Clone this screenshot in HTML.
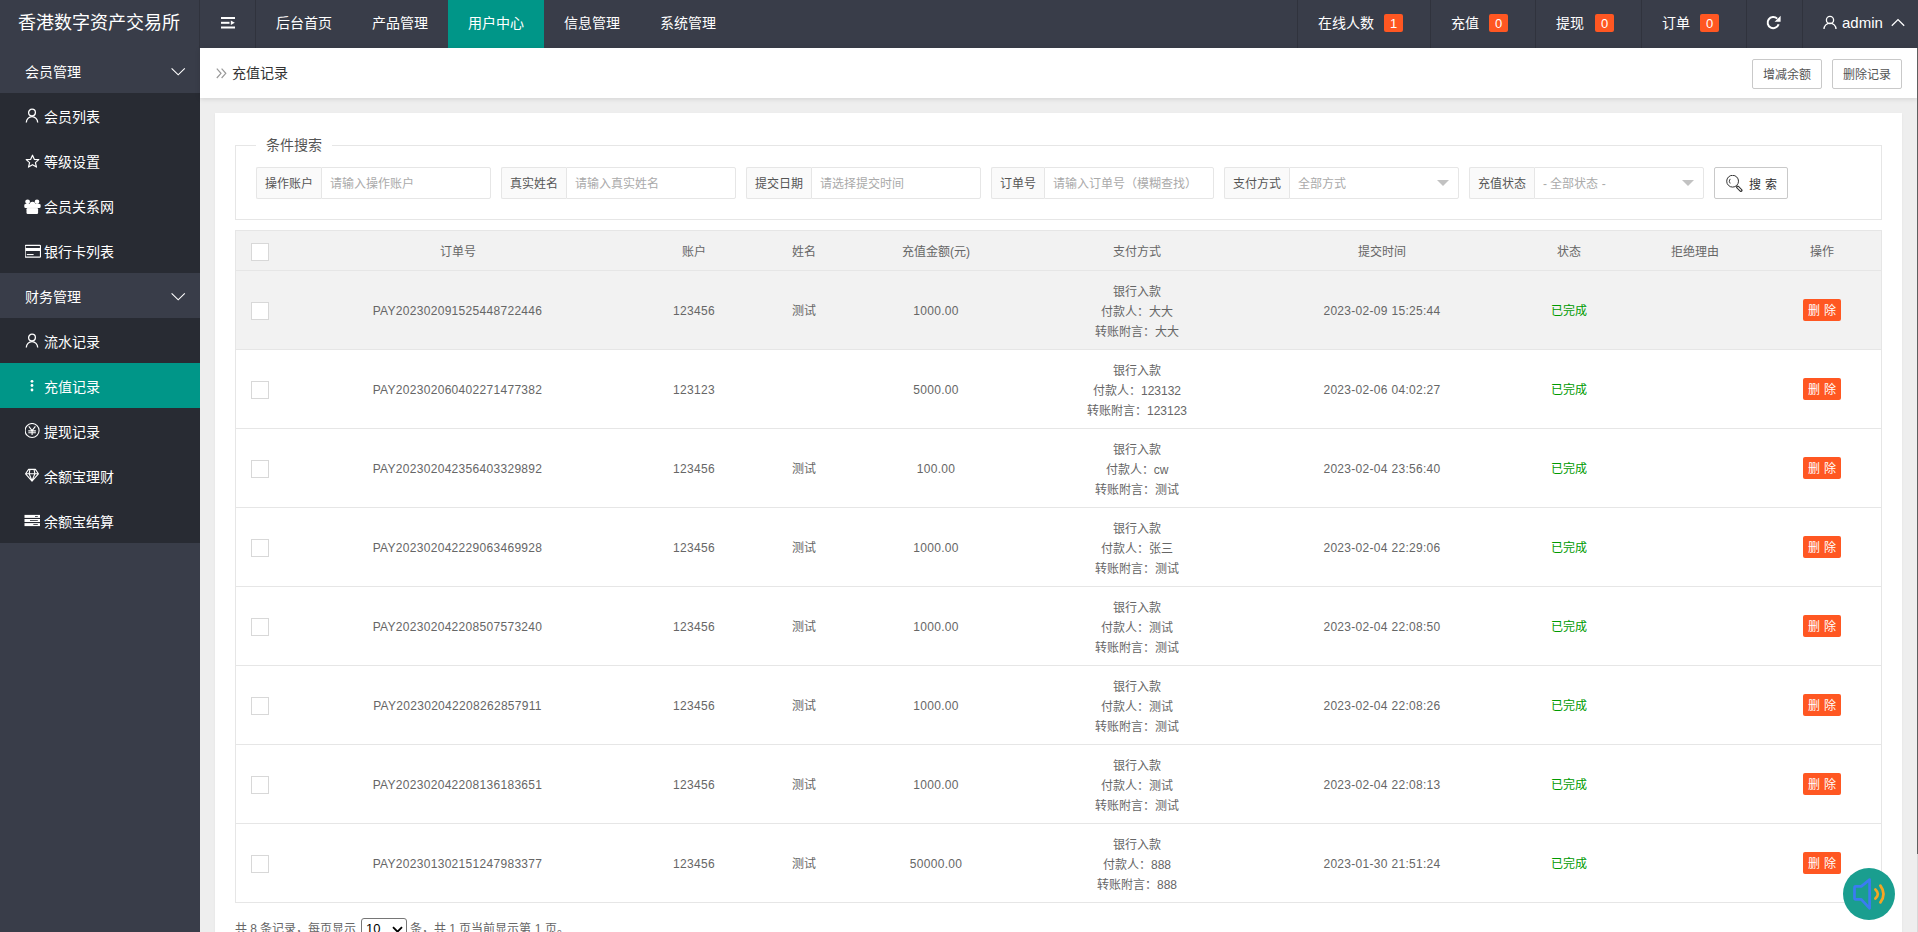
<!DOCTYPE html>
<html lang="zh-CN"><head><meta charset="utf-8">
<style>
*{box-sizing:border-box;margin:0;padding:0}
html,body{width:1918px;height:932px;overflow:hidden}
body{position:relative;background:#EEEEEE;font-family:"Liberation Sans",sans-serif;color:#666;font-size:14px}
.abs{position:absolute}
svg{display:block}
/* header */
#hd{left:0;top:0;width:1918px;height:48px;background:#393D49;color:#fff}
#logo{left:18px;top:0;line-height:46px;font-size:18px;white-space:nowrap}
.vsep{top:0;width:1px;height:48px;background:#30333d}
.nav{top:0;height:48px;line-height:46px;font-size:14px;color:#fff;white-space:nowrap}
.badge{top:14px;height:18px;width:19px;background:#FF5722;color:#fff;font-size:13px;line-height:20px;text-align:center;border-radius:2px}
/* side */
#side{left:0;top:48px;width:200px;height:884px;background:#393D49}
.grp{left:0;width:200px;height:45px;line-height:45px;color:#fff;font-size:14px}
.grp span{position:absolute;left:25px;top:1px;line-height:46px}
.sub{left:0;width:200px;height:45px;line-height:45px;color:#fff;font-size:14px;background:#282B33}
.sub span{position:absolute;left:44px;top:1px;line-height:46px}
.sub svg{position:absolute;left:25px;top:15px}
.sub.on{background:#009688}
/* content */
#crumb{left:200px;top:48px;width:1717px;height:50px;background:#fff;box-shadow:0 1px 5px rgba(0,0,0,.12)}
.btn{height:30px;line-height:30px;border:1px solid #C9C9C9;border-radius:2px;background:#fff;color:#555;font-size:12px;text-align:center}
#card{left:215px;top:113px;width:1687px;height:830px;background:#fff;box-shadow:0 1px 2px rgba(0,0,0,.06)}
#fs{left:235px;top:145px;width:1647px;height:75px;border:1px solid #E6E6E6}
#legend{left:256px;top:135px;width:76px;height:20px;background:#fff;line-height:20px;font-size:14px;color:#555;padding-left:10px}
.lab{top:167px;height:32px;border:1px solid #E6E6E6;border-right:none;background:#FAFAFA;border-radius:2px 0 0 2px;line-height:32px;font-size:12px;color:#555;padding-left:8px;white-space:nowrap}
.inp{top:167px;height:32px;width:170px;border:1px solid #E6E6E6;border-radius:0 2px 2px 0;line-height:32px;font-size:12px;color:#AAAAAA;padding-left:8px;white-space:nowrap;background:#fff}
.arrow{top:12px;width:0;height:0;border-left:6px solid transparent;border-right:6px solid transparent;border-top:6px solid #C2C2C2}
/* table */
#tbl{left:235px;top:230px;width:1647px;border:1px solid #E6E6E6;border-bottom:none}
.tr{position:relative;height:79px;border-bottom:1px solid #E6E6E6;background:#fff}
.th{height:40px;background:#F2F2F2}
.c{position:absolute;top:0;text-align:center;font-size:12px;color:#666;line-height:20px;white-space:nowrap}
.tr .c{top:30px}
.tr .c.m{top:11px}
.tr.th .c{top:11px}
.cb{position:absolute;left:15px;width:18px;height:18px;border:1px solid #D8D8D8;background:#fff;border-radius:0}
.tr .cb{top:31px}
.tr.th .cb{top:12px}
.ok{color:#009a00}
.n{letter-spacing:0.3px}
.del{position:absolute;top:28px;height:22px;width:38px;background:#FF5722;color:#fff;border-radius:2px;font-size:12px;line-height:25px;text-align:center}
</style></head><body>

<div id="hd" class="abs">
  <div id="logo" class="abs">香港数字资产交易所</div>
  <div class="vsep abs" style="left:199px"></div>
  <div class="vsep abs" style="left:255px"></div>
  <svg class="abs" style="left:221px;top:17px" width="15" height="12" viewBox="0 0 15 12">
    <rect x="0" y="0" width="14" height="2" fill="#fff"/>
    <rect x="0" y="4.8" width="8.5" height="2" fill="#fff"/>
    <path d="M9.8 3.5 L13.8 5.8 L9.8 8.1 Z" fill="#fff"/>
    <rect x="0" y="9.5" width="14" height="2" fill="#fff"/>
  </svg>
  <div class="nav abs" style="left:276px">后台首页</div>
  <div class="nav abs" style="left:372px">产品管理</div>
  <div class="abs" style="left:448px;top:0;width:96px;height:48px;background:#009688"></div>
  <div class="nav abs" style="left:468px">用户中心</div>
  <div class="nav abs" style="left:564px">信息管理</div>
  <div class="nav abs" style="left:660px">系统管理</div>

  <div class="vsep abs" style="left:1297px"></div>
  <div class="nav abs" style="left:1318px">在线人数</div>
  <div class="badge abs" style="left:1384px">1</div>
  <div class="vsep abs" style="left:1430px"></div>
  <div class="nav abs" style="left:1451px">充值</div>
  <div class="badge abs" style="left:1489px">0</div>
  <div class="vsep abs" style="left:1535px"></div>
  <div class="nav abs" style="left:1556px">提现</div>
  <div class="badge abs" style="left:1595px">0</div>
  <div class="vsep abs" style="left:1641px"></div>
  <div class="nav abs" style="left:1662px">订单</div>
  <div class="badge abs" style="left:1700px">0</div>
  <div class="vsep abs" style="left:1746px"></div>
  <svg class="abs" style="left:1766px;top:15px" width="16" height="15" viewBox="0 0 16 15">
    <path d="M12.6 9.2 A5.6 5.6 0 1 1 11.2 3.6" fill="none" stroke="#fff" stroke-width="2"/>
    <path d="M8.6 6.8 L14.6 6.8 L14.6 0.8 Z" fill="#fff"/>
  </svg>
  <div class="vsep abs" style="left:1802px"></div>
  <svg class="abs" style="left:1823px;top:15px" width="14" height="15" viewBox="0 0 14 15">
    <circle cx="7" cy="5" r="3.6" fill="none" stroke="#fff" stroke-width="1.3"/>
    <path d="M1 14 A6 5.8 0 0 1 13 14" fill="none" stroke="#fff" stroke-width="1.3"/>
  </svg>
  <div class="nav abs" style="left:1842px;font-size:15px;line-height:45px">admin</div>
  <svg class="abs" style="left:1891px;top:18px" width="14" height="9" viewBox="0 0 14 9">
    <path d="M0.8 7.8 L7 1.6 L13.2 7.8" fill="none" stroke="#fff" stroke-width="1.3"/>
  </svg>
</div>

<div id="side" class="abs">
  <div class="grp abs" style="top:0"><span>会员管理</span>
    <svg class="abs" style="left:171px;top:19px" width="15" height="9" viewBox="0 0 15 9"><path d="M0.6 1.4 L7.2 7.8 L13.8 1.4" fill="none" stroke="#fff" stroke-width="1.15"/></svg>
  </div>
  <div class="sub abs" style="top:45px"><span>会员列表</span>
    <svg width="14" height="15" viewBox="0 0 14 15"><circle cx="7" cy="4.6" r="3.4" fill="none" stroke="#fff" stroke-width="1.3"/><path d="M1.3 14.5 A5.7 5.9 0 0 1 12.7 14.5" fill="none" stroke="#fff" stroke-width="1.3"/></svg>
  </div>
  <div class="sub abs" style="top:90px"><span>等级设置</span>
    <svg style="top:16px" width="15" height="15" viewBox="0 0 15 15"><path d="M7.5 1.2 L9.3 5.3 L13.8 5.6 L10.4 8.6 L11.5 13.1 L7.5 10.7 L3.5 13.1 L4.6 8.6 L1.2 5.6 L5.7 5.3 Z" fill="none" stroke="#fff" stroke-width="1.2" stroke-linejoin="round"/></svg>
  </div>
  <div class="sub abs" style="top:135px"><span>会员关系网</span>
    <svg style="left:24px;top:16px" width="17" height="16" viewBox="0 0 17 16"><circle cx="3.6" cy="2.8" r="2.4" fill="#fff"/><circle cx="13" cy="2.8" r="2.3" fill="#fff"/><rect x="0.3" y="4.9" width="16.3" height="4.1" rx="1.2" fill="#fff"/><circle cx="8.5" cy="5.6" r="2.9" fill="#fff"/><rect x="2.5" y="9" width="11.6" height="6" rx="1.2" fill="#fff"/><path d="M3 9.1 H14" stroke="#d8d8d8" stroke-width="0.4"/></svg>
  </div>
  <div class="sub abs" style="top:180px"><span>银行卡列表</span>
    <svg width="16" height="16" viewBox="0 0 16 16"><rect x="0.1" y="2.3" width="15.4" height="11.8" rx="0.8" fill="none" stroke="#fff" stroke-width="1.2"/><rect x="0.5" y="5" width="14.6" height="3" fill="#fff"/><rect x="1.8" y="11" width="6.8" height="1.1" fill="#fff"/></svg>
  </div>
  <div class="grp abs" style="top:225px"><span>财务管理</span>
    <svg class="abs" style="left:171px;top:19px" width="15" height="9" viewBox="0 0 15 9"><path d="M0.6 1.4 L7.2 7.8 L13.8 1.4" fill="none" stroke="#fff" stroke-width="1.15"/></svg>
  </div>
  <div class="sub abs" style="top:270px"><span>流水记录</span>
    <svg width="14" height="15" viewBox="0 0 14 15"><circle cx="7" cy="4.6" r="3.4" fill="none" stroke="#fff" stroke-width="1.3"/><path d="M1.3 14.5 A5.7 5.9 0 0 1 12.7 14.5" fill="none" stroke="#fff" stroke-width="1.3"/></svg>
  </div>
  <div class="sub on abs" style="top:315px"><span>充值记录</span>
    <svg width="14" height="15" viewBox="0 0 14 15"><circle cx="7" cy="3.3" r="1.4" fill="#fff"/><circle cx="7" cy="7.5" r="1.4" fill="#fff"/><circle cx="7" cy="12" r="1.4" fill="#fff"/></svg>
  </div>
  <div class="sub abs" style="top:360px"><span>提现记录</span>
    <svg width="16" height="16" viewBox="0 0 16 16"><circle cx="7.1" cy="7.5" r="7" fill="none" stroke="#fff" stroke-width="1.1"/><path d="M3.8 3.4 L7.1 7.6 L10.4 3.4 M7.1 7.6 V11.9 M3.3 7.9 H10.9 M3.3 9.7 H10.9" fill="none" stroke="#fff" stroke-width="1.1"/></svg>
  </div>
  <div class="sub abs" style="top:405px"><span>余额宝理财</span>
    <svg width="15" height="15" viewBox="0 0 15 15"><path d="M3.6 1.4 H10.4 L13.4 5.8 L7 13.2 L0.6 5.8 Z M0.6 5.8 H13.4 M4.9 1.6 L4.1 5.8 L7 12.6 L9.9 5.8 L9.1 1.6" fill="none" stroke="#fff" stroke-width="1.1" stroke-linejoin="round"/></svg>
  </div>
  <div class="sub abs" style="top:450px"><span>余额宝结算</span>
    <svg style="left:24px" width="17" height="15" viewBox="0 0 17 15"><rect x="0.5" y="1.9" width="15.5" height="3" fill="#fff"/><rect x="0.5" y="6" width="15.5" height="3" fill="#fff"/><rect x="0.5" y="10.1" width="15.5" height="3" fill="#fff"/><rect x="11" y="3.1" width="2.8" height="0.8" fill="#282B33"/><rect x="6" y="7.1" width="7.8" height="0.8" fill="#282B33"/><rect x="9.3" y="11.2" width="4.5" height="0.8" fill="#282B33"/></svg>
  </div>
</div>

<div id="crumb" class="abs">
  <svg class="abs" style="left:15.5px;top:20px" width="12" height="11" viewBox="0 0 12 11"><path d="M0.8 0.6 L5 5.3 L0.8 10 M5.6 0.6 L9.8 5.3 L5.6 10" fill="none" stroke="#999" stroke-width="1.2"/></svg>
  <div class="abs" style="left:32px;top:0;line-height:50px;font-size:14px;color:#333">充值记录</div>
  <div class="btn abs" style="left:1552px;top:11px;width:70px">增减余额</div>
  <div class="btn abs" style="left:1632px;top:11px;width:70px">删除记录</div>
</div>
<div class="abs" style="left:1917px;top:48px;width:1px;height:806px;background:#5f5f5f"></div>
<div class="abs" style="left:1917px;top:854px;width:1px;height:78px;background:#d8d8d8"></div>

<div id="card" class="abs"></div>
<div id="fs" class="abs"></div>
<div id="legend" class="abs">条件搜索</div>

<div class="lab abs" style="left:256px;width:65px">操作账户</div>
<div class="inp abs" style="left:321px">请输入操作账户</div>
<div class="lab abs" style="left:501px;width:65px">真实姓名</div>
<div class="inp abs" style="left:566px">请输入真实姓名</div>
<div class="lab abs" style="left:746px;width:65px">提交日期</div>
<div class="inp abs" style="left:811px">请选择提交时间</div>
<div class="lab abs" style="left:991px;width:53px">订单号</div>
<div class="inp abs" style="left:1044px">请输入订单号（模糊查找）</div>
<div class="lab abs" style="left:1224px;width:65px">支付方式</div>
<div class="inp abs" style="left:1289px">全部方式<div class="arrow abs" style="left:147px"></div></div>
<div class="lab abs" style="left:1469px;width:65px">充值状态</div>
<div class="inp abs" style="left:1534px">- 全部状态 -<div class="arrow abs" style="left:147px"></div></div>
<div class="btn abs" style="left:1714px;top:167px;width:74px;height:32px;line-height:30px;color:#333;text-align:left">
  <svg class="abs" style="left:10px;top:7px" width="18" height="17" viewBox="0 0 18 17"><circle cx="7.6" cy="6.2" r="5.9" fill="none" stroke="#333" stroke-width="1"/><path d="M12.7 12.2 L15.9 15.4" stroke="#333" stroke-width="3.2" stroke-linecap="round"/><path d="M12.9 12.4 L15.7 15.2" stroke="#fff" stroke-width="1.2" stroke-linecap="round"/><path d="M5.2 3.9 A3.6 3.6 0 0 0 5.2 8.5" fill="none" stroke="#333" stroke-width="0.9"/></svg>
  <span class="abs" style="left:34px;top:2px;letter-spacing:0.4px">搜&nbsp;索</span>
</div>

<div id="tbl" class="abs">
  <div class="tr th">
    <div class="cb"></div>
    <div class="c" style="left:49px;width:345px">订单号</div>
    <div class="c" style="left:394px;width:128px">账户</div>
    <div class="c" style="left:522px;width:91px">姓名</div>
    <div class="c" style="left:613px;width:174px">充值金额(元)</div>
    <div class="c" style="left:787px;width:228px">支付方式</div>
    <div class="c" style="left:1015px;width:262px">提交时间</div>
    <div class="c" style="left:1277px;width:112px">状态</div>
    <div class="c" style="left:1389px;width:139px">拒绝理由</div>
    <div class="c" style="left:1528px;width:116px">操作</div>
  </div>
  <!--ROWS-->
  <div class="tr" style="background:#F2F2F2">
    <div class="cb"></div>
    <div class="c n" style="left:49px;width:345px">PAY202302091525448722446</div>
    <div class="c n" style="left:394px;width:128px">123456</div>
    <div class="c" style="left:522px;width:91px">测试</div>
    <div class="c n" style="left:613px;width:174px">1000.00</div>
    <div class="c m" style="left:787px;width:228px">银行入款<br>付款人：大大<br>转账附言：大大</div>
    <div class="c n" style="left:1015px;width:262px">2023-02-09 15:25:44</div>
    <div class="c ok" style="left:1277px;width:112px">已完成</div>
    <div class="del" style="left:1567px">删&nbsp;除</div>
  </div>
  <div class="tr">
    <div class="cb"></div>
    <div class="c n" style="left:49px;width:345px">PAY202302060402271477382</div>
    <div class="c n" style="left:394px;width:128px">123123</div>
    <div class="c" style="left:522px;width:91px"></div>
    <div class="c n" style="left:613px;width:174px">5000.00</div>
    <div class="c m" style="left:787px;width:228px">银行入款<br>付款人：123132<br>转账附言：123123</div>
    <div class="c n" style="left:1015px;width:262px">2023-02-06 04:02:27</div>
    <div class="c ok" style="left:1277px;width:112px">已完成</div>
    <div class="del" style="left:1567px">删&nbsp;除</div>
  </div>
  <div class="tr">
    <div class="cb"></div>
    <div class="c n" style="left:49px;width:345px">PAY202302042356403329892</div>
    <div class="c n" style="left:394px;width:128px">123456</div>
    <div class="c" style="left:522px;width:91px">测试</div>
    <div class="c n" style="left:613px;width:174px">100.00</div>
    <div class="c m" style="left:787px;width:228px">银行入款<br>付款人：cw<br>转账附言：测试</div>
    <div class="c n" style="left:1015px;width:262px">2023-02-04 23:56:40</div>
    <div class="c ok" style="left:1277px;width:112px">已完成</div>
    <div class="del" style="left:1567px">删&nbsp;除</div>
  </div>
  <div class="tr">
    <div class="cb"></div>
    <div class="c n" style="left:49px;width:345px">PAY202302042229063469928</div>
    <div class="c n" style="left:394px;width:128px">123456</div>
    <div class="c" style="left:522px;width:91px">测试</div>
    <div class="c n" style="left:613px;width:174px">1000.00</div>
    <div class="c m" style="left:787px;width:228px">银行入款<br>付款人：张三<br>转账附言：测试</div>
    <div class="c n" style="left:1015px;width:262px">2023-02-04 22:29:06</div>
    <div class="c ok" style="left:1277px;width:112px">已完成</div>
    <div class="del" style="left:1567px">删&nbsp;除</div>
  </div>
  <div class="tr">
    <div class="cb"></div>
    <div class="c n" style="left:49px;width:345px">PAY202302042208507573240</div>
    <div class="c n" style="left:394px;width:128px">123456</div>
    <div class="c" style="left:522px;width:91px">测试</div>
    <div class="c n" style="left:613px;width:174px">1000.00</div>
    <div class="c m" style="left:787px;width:228px">银行入款<br>付款人：测试<br>转账附言：测试</div>
    <div class="c n" style="left:1015px;width:262px">2023-02-04 22:08:50</div>
    <div class="c ok" style="left:1277px;width:112px">已完成</div>
    <div class="del" style="left:1567px">删&nbsp;除</div>
  </div>
  <div class="tr">
    <div class="cb"></div>
    <div class="c n" style="left:49px;width:345px">PAY202302042208262857911</div>
    <div class="c n" style="left:394px;width:128px">123456</div>
    <div class="c" style="left:522px;width:91px">测试</div>
    <div class="c n" style="left:613px;width:174px">1000.00</div>
    <div class="c m" style="left:787px;width:228px">银行入款<br>付款人：测试<br>转账附言：测试</div>
    <div class="c n" style="left:1015px;width:262px">2023-02-04 22:08:26</div>
    <div class="c ok" style="left:1277px;width:112px">已完成</div>
    <div class="del" style="left:1567px">删&nbsp;除</div>
  </div>
  <div class="tr">
    <div class="cb"></div>
    <div class="c n" style="left:49px;width:345px">PAY202302042208136183651</div>
    <div class="c n" style="left:394px;width:128px">123456</div>
    <div class="c" style="left:522px;width:91px">测试</div>
    <div class="c n" style="left:613px;width:174px">1000.00</div>
    <div class="c m" style="left:787px;width:228px">银行入款<br>付款人：测试<br>转账附言：测试</div>
    <div class="c n" style="left:1015px;width:262px">2023-02-04 22:08:13</div>
    <div class="c ok" style="left:1277px;width:112px">已完成</div>
    <div class="del" style="left:1567px">删&nbsp;除</div>
  </div>
  <div class="tr">
    <div class="cb"></div>
    <div class="c n" style="left:49px;width:345px">PAY202301302151247983377</div>
    <div class="c n" style="left:394px;width:128px">123456</div>
    <div class="c" style="left:522px;width:91px">测试</div>
    <div class="c n" style="left:613px;width:174px">50000.00</div>
    <div class="c m" style="left:787px;width:228px">银行入款<br>付款人：888<br>转账附言：888</div>
    <div class="c n" style="left:1015px;width:262px">2023-01-30 21:51:24</div>
    <div class="c ok" style="left:1277px;width:112px">已完成</div>
    <div class="del" style="left:1567px">删&nbsp;除</div>
  </div>
  <!--ENDROWS-->
</div>

<div class="abs" style="left:235px;top:919px;font-size:12px;color:#666;line-height:20px;white-space:nowrap">共 8 条记录，每页显示</div>
<div class="abs" style="left:361px;top:918px;width:46px;height:22px;border:1px solid #767676;border-radius:3px;background:#fff;font-size:13px;color:#000;padding-left:4px;line-height:20px">10
  <svg class="abs" style="left:30px;top:7px" width="11" height="8" viewBox="0 0 11 8"><path d="M1 1.2 L5.5 5.7 L10 1.2" fill="none" stroke="#000" stroke-width="1.8"/></svg>
</div>
<div class="abs" style="left:410px;top:919px;font-size:12px;color:#666;line-height:20px;white-space:nowrap">条，共 1 页当前显示第 1 页。</div>

<div class="abs" style="left:1843px;top:868px;width:52px;height:52px;border-radius:50%;background:#1A9E8F">
  <svg class="abs" style="left:0;top:0" width="52" height="52" viewBox="0 0 52 52">
    <path d="M26.6 11.6 L18.3 18.4 H12.6 Q11.5 18.4 11.5 20 V29.8 Q11.5 31.3 12.6 31.3 H18.3 L26.6 40.3 Z" fill="none" stroke="#3B7BF2" stroke-width="2.7" stroke-linejoin="round"/>
    <path d="M32.4 21.4 Q37.3 26 32.4 30.6" fill="none" stroke="#F5A623" stroke-width="2.7" stroke-linecap="round"/>
    <path d="M37.4 17.6 Q43.6 26 37.4 34.4" fill="none" stroke="#F5A623" stroke-width="2.7" stroke-linecap="round"/>
  </svg>
</div>
</body></html>
